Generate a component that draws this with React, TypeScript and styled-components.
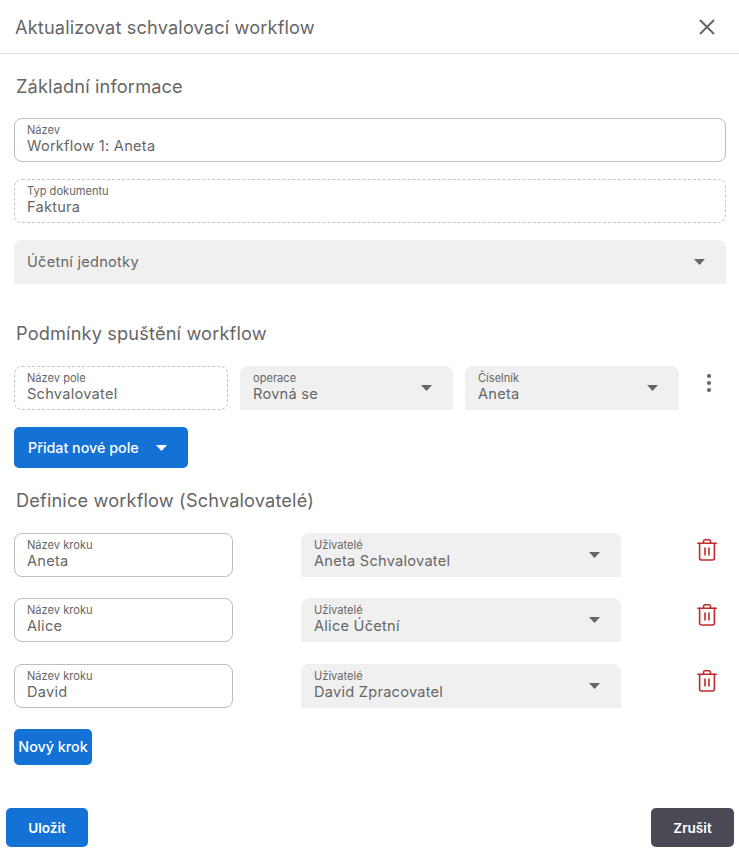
import React from "react";
import styled, { createGlobalStyle } from "styled-components";

const Global = createGlobalStyle`
  html, body { margin: 0; padding: 0; background: #fff; }
  body { font-family: "Inter", "Noto Sans", "Liberation Sans", sans-serif; color: #666; }
`;
const Page = styled.div`
  width: 739px; height: 852px; display: flex; flex-direction: column; overflow: hidden;
`;
const Header = styled.header`
  height: 53px; flex: none; border-bottom: 1px solid #e2e2e2; display: flex; align-items: center;
  justify-content: space-between; padding: 0 23px 0 15px;
`;
const Title = styled.h1`
  margin: 0; font-size: 18.2px; font-weight: 400; color: #666; letter-spacing: 0.14px;
`;
const IconBtn = styled.button`
  background: none; border: 0; padding: 0; display: flex; cursor: pointer;
`;
const Main = styled.main`
  flex: 1; padding: 0 13px 0 14px; display: flex; flex-direction: column;
`;
const SectionTitle = styled.h2<{ $top: number; $bottom: number }>`
  margin: ${(p) => p.$top}px 0 ${(p) => p.$bottom}px 2px;
  font-size: 18.2px; line-height: 24px; font-weight: 400; color: #666; letter-spacing: 0.15px;
`;
const Field = styled.div<{ $variant?: "solid" | "dashed" | "select"; $width?: number; $center?: boolean }>`
  box-sizing: border-box; height: 44px; position: relative; display: flex; flex-direction: column;
  justify-content: ${(p) => (p.$center ? "center" : "flex-start")};
  padding: ${(p) => (p.$center ? "0 13px" : p.$variant === "select" ? "6px 13px 0" : "5px 12px 0")};
  flex: ${(p) => (p.$width ? "none" : "1 0 auto")};
  width: ${(p) => (p.$width ? `${p.$width}px` : "auto")};
  border-radius: ${(p) => (p.$variant === "select" ? "8px 8px 0 0" : "8px")};
  background: ${(p) => (p.$variant === "select" ? "#f0f0f0" : "#fff")};
  border: ${(p) =>
    p.$variant === "select" ? "0" : p.$variant === "dashed" ? "1px dashed #c4c4c4" : "1px solid #bdbdbd"};
`;
const Label = styled.span`
  font-size: 11.1px; line-height: 13px; color: #666; white-space: nowrap;
`;
const Value = styled.span`
  font-size: 14.6px; line-height: 18px; color: #666; letter-spacing: 0.25px; white-space: nowrap;
`;
const CaretWrap = styled.span`
  position: absolute; right: 21px; top: 19px; display: flex;
`;
const Stack = styled.div`
  display: flex; flex-direction: column; gap: 17px;
`;
const CondRow = styled.div`
  display: flex; align-items: flex-start; gap: 12px;
`;
const Kebab = styled.button`
  background: none; border: 0; padding: 0; margin: 7px 0 0 15px; display: flex; flex: none; cursor: pointer;
`;
const PrimaryButton = styled.button<{ $w: number; $h: number; $top?: number; $start?: boolean }>`
  box-sizing: border-box; width: ${(p) => p.$w}px; height: ${(p) => p.$h}px; margin-top: ${(p) => p.$top ?? 0}px;
  background: #1471d6; color: #fff; border: 0; border-radius: 5px; font: inherit; font-size: 14.3px; font-weight: 500;
  display: flex; align-items: center; justify-content: ${(p) => (p.$start ? "flex-start" : "center")}; gap: 17px;
  padding: ${(p) => (p.$start ? "0 0 0 14px" : "0")}; cursor: pointer; flex: none; white-space: nowrap;
`;
const StepList = styled.div`
  display: flex; flex-direction: column; gap: 21.4px;
`;
const StepRow = styled.div`
  display: flex; align-items: flex-start;
`;
const StepSelect = styled.div`
  margin-left: 68px; display: flex;
`;
const Trash = styled.button`
  background: none; border: 0; padding: 0; margin: 6px 0 0 76px; display: flex; cursor: pointer;
`;
const Footer = styled.footer`
  box-sizing: border-box; flex: none; height: 44px; padding: 0 5px 0 6px; display: flex; justify-content: space-between; align-items: flex-start;
`;
const FooterBtn = styled.button<{ $dark?: boolean }>`
  width: ${(p) => (p.$dark ? 83 : 82)}px; height: 39px; border: 0; border-radius: 5px;
  background: ${(p) => (p.$dark ? "#4a4a55" : "#1471d6")}; color: #fff; font: inherit; font-size: 13.6px; font-weight: 600; cursor: pointer;
`;

const Caret = ({ color = "#666" }: { color?: string }) => (
  <svg width="11" height="6" viewBox="0 0 11 6"><path d="M0 0h11L5.5 6z" fill={color} /></svg>
);
const TrashIcon = () => (
  <svg width="20" height="22" viewBox="0 0 20 22" fill="none" stroke="#c62828" strokeWidth="1.6" strokeLinejoin="round" strokeLinecap="round">
    <path d="M.8 4.2h18.4" />
    <path d="M2.6 4.2V19a2 2 0 0 0 2 2h10.8a2 2 0 0 0 2-2V4.2" />
    <path d="M6.5 4V2.4A1.6 1.6 0 0 1 8.1.8h3.8a1.6 1.6 0 0 1 1.6 1.6V4" />
    <path d="M8 9v7M12 9v7" />
  </svg>
);
const SelectField = ({ label, value, width }: { label: string; value: string; width?: number }) => (
  <Field $variant="select" $width={width}>
    <Label>{label}</Label>
    <Value>{value}</Value>
    <CaretWrap><Caret /></CaretWrap>
  </Field>
);
const Input = ({ label, value, dashed, width }: { label: string; value: string; dashed?: boolean; width?: number }) => (
  <Field $variant={dashed ? "dashed" : "solid"} $width={width}>
    <Label>{label}</Label>
    <Value>{value}</Value>
  </Field>
);

const steps = [
  ["Aneta", "Aneta Schvalovatel"],
  ["Alice", "Alice Účetní"],
  ["David", "David Zpracovatel"],
];

export default function App() {
  return (
    <Page>
      <Global />
      <Header>
        <Title>Aktualizovat schvalovací workflow</Title>
        <IconBtn aria-label="Zavřít">
          <svg width="18" height="18" viewBox="0 0 18 18" stroke="#666" strokeWidth="2" fill="none"><path d="M2 2l14 14M16 2L2 16" /></svg>
        </IconBtn>
      </Header>
      <Main>
        <SectionTitle $top={20} $bottom={20}>Základní informace</SectionTitle>
        <Stack>
          <Input label="Název" value="Workflow 1: Aneta" />
          <Input label="Typ dokumentu" value="Faktura" dashed />
          <Field $variant="select" $center>
            <Value>Účetní jednotky</Value>
            <CaretWrap><Caret /></CaretWrap>
          </Field>
        </Stack>
        <SectionTitle $top={37} $bottom={21}>Podmínky spuštění workflow</SectionTitle>
        <CondRow>
          <Input label="Název pole" value="Schvalovatel" dashed width={214} />
          <SelectField label="operace" value="Rovná se" width={213} />
          <SelectField label="Číselník" value="Aneta" width={214} />
          <Kebab aria-label="Více">
            <svg width="6" height="20" viewBox="0 0 6 20" fill="#666"><circle cx="3" cy="3" r="2.1" /><circle cx="3" cy="10" r="2.1" /><circle cx="3" cy="17" r="2.1" /></svg>
          </Kebab>
        </CondRow>
        <PrimaryButton $w={174} $h={41} $top={17} $start>
          Přidat nové pole <Caret color="#fff" />
        </PrimaryButton>
        <SectionTitle $top={20} $bottom={21}>Definice workflow (Schvalovatelé)</SectionTitle>
        <StepList>
          {steps.map(([name, user]) => (
            <StepRow key={name}>
              <Input label="Název kroku" value={name} width={219} />
              <StepSelect>
                <SelectField label="Uživatelé" value={user} width={320} />
              </StepSelect>
              <Trash aria-label="Smazat"><TrashIcon /></Trash>
            </StepRow>
          ))}
        </StepList>
        <PrimaryButton $w={78} $h={36} $top={21}>Nový krok</PrimaryButton>
      </Main>
      <Footer>
        <FooterBtn>Uložit</FooterBtn>
        <FooterBtn $dark>Zrušit</FooterBtn>
      </Footer>
    </Page>
  );
}
